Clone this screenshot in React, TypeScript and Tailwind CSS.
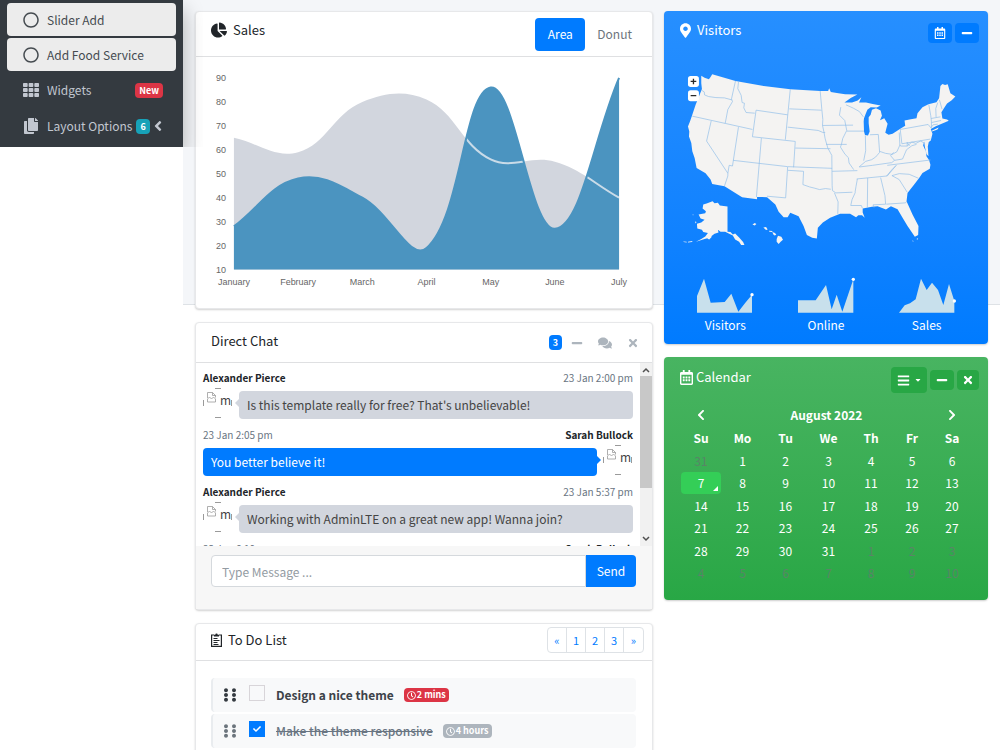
import type { ReactNode } from "react";
import {
  FaAngleLeft,
  FaBars,
  FaCaretDown,
  FaChartPie,
  FaCheck,
  FaChevronLeft,
  FaChevronRight,
  FaComments,
  FaCopy,
  FaEllipsisV,
  FaMapMarkerAlt,
  FaMinus,
  FaRegCalendarAlt,
  FaRegCircle,
  FaRegClock,
  FaTh,
  FaTimes,
} from "react-icons/fa";

const MONTHS = ["January", "February", "March", "April", "May", "June", "July"];
const ELECTRONICS = [65, 59, 80, 81, 56, 55, 40];
const DIGITAL_GOODS = [28, 48, 40, 19, 86, 27, 90];
const TICKS = [90, 80, 70, 60, 50, 40, 30, 20, 10];

const CHART = { left: 38, right: 424, top: 21, bottom: 213 };

type Point = { x: number; y: number };

function toPoints(values: number[]): Point[] {
  const step = (CHART.right - CHART.left) / (values.length - 1);
  return values.map((value, i) => ({
    x: CHART.left + i * step,
    y: CHART.bottom - ((value - 10) / 80) * (CHART.bottom - CHART.top),
  }));
}

function clampY(y: number) {
  return Math.min(CHART.bottom, Math.max(CHART.top, y));
}

// smooth line through the points, tension 0.4
function smoothLine(points: Point[]) {
  const controls = points.map((cur, i) => {
    const prev = points[i - 1] ?? cur;
    const next = points[i + 1] ?? cur;
    const before = Math.hypot(cur.x - prev.x, cur.y - prev.y);
    const after = Math.hypot(next.x - cur.x, next.y - cur.y);
    const a = (0.4 * before) / (before + after);
    const b = (0.4 * after) / (before + after);
    return {
      inX: cur.x - a * (next.x - prev.x),
      inY: clampY(cur.y - a * (next.y - prev.y)),
      outX: cur.x + b * (next.x - prev.x),
      outY: clampY(cur.y + b * (next.y - prev.y)),
    };
  });

  let d = `M${points[0].x} ${points[0].y}`;
  for (let i = 1; i < points.length; i++) {
    const c0 = controls[i - 1];
    const c1 = controls[i];
    d += ` C${c0.outX} ${c0.outY} ${c1.inX} ${c1.inY} ${points[i].x} ${points[i].y}`;
  }
  return d;
}

function SalesChart() {
  const grey = smoothLine(toPoints(ELECTRONICS));
  const blue = smoothLine(toPoints(DIGITAL_GOODS));
  const close = ` L${CHART.right} ${CHART.bottom} L${CHART.left} ${CHART.bottom} Z`;
  const step = (CHART.right - CHART.left) / 6;

  return (
    <svg viewBox="0 0 457 252" className="block w-full" role="img" aria-label="Sales by month">
      <path d={grey + close} fill="#d2d6de" />
      <path d={blue + close} fill="#4b94c0" />
      <path d={grey} fill="none" stroke="#c9dbe8" strokeWidth="2" clipPath="url(#over-blue)" />
      <clipPath id="over-blue">
        <path d={blue + close} />
      </clipPath>
      <path d={blue} fill="none" stroke="#4b94c0" strokeWidth="2" />
      <g
        fill="#666"
        className="text-[9px]"
        fontFamily="'Liberation Sans', Arial, sans-serif"
      >
        {TICKS.map((tick, i) => (
          <text key={tick} x="30" y={24 + i * 24} textAnchor="end">
            {tick}
          </text>
        ))}
        {MONTHS.map((month, i) => (
          <text key={month} x={CHART.left + i * step} y="229" textAnchor="middle">
            {month}
          </text>
        ))}
      </g>
    </svg>
  );
}

function Card({ children }: { children: ReactNode }) {
  return (
    <section className="rounded border border-[#e7e8ea] bg-white shadow-[0_1px_2px_rgba(0,0,0,0.18)]">
      {children}
    </section>
  );
}

function SidebarLink({ children, active }: { children: ReactNode; active?: boolean }) {
  return (
    <a
      href="#"
      className={
        active
          ? "flex h-[33px] items-center whitespace-nowrap rounded bg-[#ececec] pl-4 text-[#454b50]"
          : "flex h-[34px] items-center whitespace-nowrap rounded pl-4 pr-[10px] text-[#c2c7d0]"
      }
    >
      {children}
    </a>
  );
}

function Sidebar() {
  return (
    <aside className="relative z-10 w-[183px] shrink-0 self-start bg-[#343a40] px-[7px] pb-1 pt-[3px] text-[12px] leading-5 shadow-[0_10px_20px_rgba(0,0,0,0.3)] [clip-path:inset(0_-20px_0_0)]">
      <nav className="flex flex-col gap-[2px]">
        <SidebarLink active>
          <FaRegCircle className="mr-2 size-4" />
          Slider Add
        </SidebarLink>
        <SidebarLink active>
          <FaRegCircle className="mr-2 size-4" />
          Add Food Service
        </SidebarLink>
        <SidebarLink>
          <FaTh className="mr-2 size-4" />
          Widgets
          <span className="ml-auto mr-[3px] rounded bg-[#dc3545] px-1 text-[9px] font-bold leading-[15px] text-white">
            New
          </span>
        </SidebarLink>
        <SidebarLink>
          <FaCopy className="mr-2 size-4" />
          Layout Options
          <span className="ml-1 rounded bg-[#17a2b8] px-1 text-[9px] font-bold leading-[15px] text-white">
            6
          </span>
          <FaAngleLeft className="ml-auto size-4" />
        </SidebarLink>
      </nav>
    </aside>
  );
}

function SalesCard() {
  return (
    <Card>
      <header className="flex h-[45px] items-center border-b border-[#dfe0e2] pl-[15px] pr-2">
        <h3 className="flex items-center gap-[6px] pb-2 text-[13px] leading-5">
          <FaChartPie className="size-4" />
          Sales
        </h3>
        <div className="ml-auto flex text-[12px] leading-5">
          <button className="h-[33px] w-[50px] rounded bg-[#007bff] text-white">Area</button>
          <button className="h-[33px] rounded px-3 text-[#6c757d]">Donut</button>
        </div>
      </header>
      <SalesChart />
    </Card>
  );
}

function BrokenAvatar() {
  return (
    <svg viewBox="0 0 30 30" className="size-[30px] shrink-0" role="img" aria-label="message user image">
      <g fill="none" stroke="#9a9a9a">
        <path d="M12 .5h6M12 29.500h6M.500 12v6M28.500 12v6" />
        <path d="M4.500 4.500h5l3 3v2M4.500 4.500v5.500M9.500 4.500v3h3M4.500 11l2-2 2 2 2-2 2 2v3h-8z" strokeWidth=".8" />
      </g>
      <text x="17" y="17" fill="#444" className="text-[12px]">
        m
      </text>
    </svg>
  );
}

type MessageProps = { name: string; time: string; text?: string; own?: boolean };

function Message({ name, time, text, own }: MessageProps) {
  return (
    <div className="h-[57px]">
      <div
        className={
          own
            ? "flex flex-row-reverse justify-between text-[10px] leading-4"
            : "flex justify-between text-[10px] leading-4"
        }
      >
        <b>{name}</b>
        <span className="text-[#697582]">{time}</span>
      </div>
      {text && (
        <div className={own ? "mt-[2px] flex flex-row-reverse gap-[6px]" : "mt-[2px] flex gap-[6px]"}>
          <BrokenAvatar />
          <p
            className={
              own
                ? "relative mt-[3px] h-[28px] flex-1 rounded bg-[#007bff] px-2 text-[12px] leading-[28px] text-white"
                : "relative mt-[3px] h-[28px] flex-1 rounded bg-[#d2d6de] px-2 text-[12px] leading-[28px] text-[#444]"
            }
          >
            {text}
            <span
              className={
                own
                  ? "absolute left-full top-2 border-y-4 border-l-4 border-y-transparent border-l-[#007bff]"
                  : "absolute right-full top-2 border-y-4 border-r-4 border-y-transparent border-r-[#d2d6de]"
              }
            />
          </p>
        </div>
      )}
    </div>
  );
}

function ChatCard() {
  return (
    <Card>
      <header className="flex h-[40px] items-center border-b border-[#dfe0e2] pl-[15px] pr-[13px]">
        <h3 className="pb-1 text-[13px] leading-5">Direct Chat</h3>
        <div className="ml-auto flex items-center text-[#adb5bd]">
          <span className="rounded bg-[#007bff] px-1 text-[9px] font-bold leading-[15px] text-white">
            3
          </span>
          <button aria-label="Collapse" className="ml-[9px]">
            <FaMinus className="size-3" />
          </button>
          <button aria-label="Contacts" className="ml-[15px]">
            <FaComments className="size-[14px]" />
          </button>
          <button aria-label="Close" className="ml-[15px]">
            <FaTimes className="size-3" />
          </button>
        </div>
      </header>
      <div className="flex h-[183px] overflow-hidden">
        <div className="flex-1 p-[7px]">
          <Message
            name="Alexander Pierce"
            time="23 Jan 2:00 pm"
            text="Is this template really for free? That's unbelievable!"
          />
          <Message own name="Sarah Bullock" time="23 Jan 2:05 pm" text="You better believe it!" />
          <Message
            name="Alexander Pierce"
            time="23 Jan 5:37 pm"
            text="Working with AdminLTE on a great new app! Wanna join?"
          />
          <Message own name="Sarah Bullock" time="23 Jan 6:10 pm" />
        </div>
        {/* scrollbar */}
        <div className="flex w-3 flex-col items-center bg-[#f1f1f1] py-1" aria-hidden="true">
          <svg viewBox="0 0 8 6" className="h-[6px] w-2 shrink-0">
            <path d="M1 5l3-3 3 3" fill="none" stroke="#505050" strokeWidth="1.500" />
          </svg>
          <div className="mt-[3px] h-[112px] w-full bg-[#c8c8c8]" />
          <svg viewBox="0 0 8 6" className="mt-auto h-[6px] w-2 shrink-0">
            <path d="M1 1l3 3 3-3" fill="none" stroke="#505050" strokeWidth="1.500" />
          </svg>
        </div>
      </div>
      <form className="flex bg-[#f7f7f7] pb-[22px] pl-[15px] pr-4 pt-[9px] text-[12px] leading-5">
        <input
          type="text"
          aria-label="Message"
          placeholder="Type Message ..."
          className="h-8 min-w-0 flex-1 rounded-l border border-[#d5d9dd] bg-white px-[10px] placeholder:text-[#939ba2]"
        />
        <button type="button" className="h-8 w-[50px] rounded-r bg-[#007bff] text-white">
          Send
        </button>
      </form>
    </Card>
  );
}

type TodoProps = { label: string; time: string; done?: boolean };

function TodoItem({ label, time, done }: TodoProps) {
  return (
    <li className="flex h-[34px] items-center rounded-sm border-l-2 border-[#e9ecef] bg-[#f8f9fa] pl-2">
      <span
        className={
          done
            ? "flex w-[18px] justify-center gap-[2px] text-[#6c757d]"
            : "flex w-[18px] justify-center gap-[2px] text-[#343a40]"
        }
      >
        <FaEllipsisV className="h-[14px] w-[6px]" />
        <FaEllipsisV className="h-[14px] w-[6px]" />
      </span>
      <label className="flex items-center">
        <span className="relative mb-1 ml-[10px] mr-[11px] flex size-4">
          <input
            type="checkbox"
            defaultChecked={done}
            className="peer size-4 appearance-none border border-[#d8d5d9] bg-[#f8f9fa] checked:border-[#007bff] checked:bg-[#007bff]"
          />
          <FaCheck className="pointer-events-none absolute left-1 top-1 hidden size-2 text-white peer-checked:block" />
        </span>
        <span
          className={
            done
              ? "text-[12px] font-medium leading-5 text-[#697582] line-through"
              : "text-[12px] font-bold leading-5 text-[#3d4349]"
          }
        >
          {label}
        </span>
      </label>
      <span
        className={
          done
            ? "ml-[10px] flex items-center gap-px rounded bg-[#adb5bd] px-[3px] text-[9px] font-bold leading-[14px] text-white"
            : "ml-[10px] flex items-center gap-px rounded bg-[#dc3545] px-[3px] text-[9px] font-bold leading-[14px] text-white"
        }
      >
        <FaRegClock className="size-[9px]" />
        {time}
      </span>
    </li>
  );
}

function TodoCard() {
  return (
    <Card>
      <header className="flex h-[37px] items-center border-b border-[#dfe0e2] pb-px pl-[15px] pr-2">
        <h3 className="flex items-center gap-[6px] pb-1 text-[13px] leading-5">
          <svg viewBox="0 0 11 14" className="h-[14px] w-[11px]" fill="none" stroke="currentColor">
            <path d="M3 2H.600v11.400h9.800V2H8" strokeWidth="1.200" />
            <path d="M3 3.500V1.800h1.300a1.200 1.200 0 0 1 2.400 0H8v1.700z" fill="currentColor" stroke="none" />
            <path d="M2.500 5.500h4M2.500 7.500h6M2.500 9.500h4M2.500 11.500h5" />
          </svg>
          To Do List
        </h3>
        <nav className="mb-[3px] ml-auto flex divide-x divide-[#dee2e6] rounded border border-[#dee2e6] text-[11px] leading-6 text-[#007bff]">
          {["«", "1", "2", "3", "»"].map((page) => (
            <a key={page} href="#" className="w-[19px] text-center">
              {page}
            </a>
          ))}
        </nav>
      </header>
      <ul className="flex flex-col gap-[2px] pb-4 pl-[15px] pr-4 pt-[17px]">
        <TodoItem label="Design a nice theme" time="2 mins" />
        <TodoItem done label="Make the theme responsive" time="4 hours" />
      </ul>
    </Card>
  );
}

function UsMap() {
  return (
    <svg viewBox="54 192 849 543" className="block w-full" role="img" aria-label="Map of the United States">
      <g fill="#f4f3f2" strokeLinejoin="round">
        {/* mainland */}
        <path d="M112 212L122 218 135 223 140 216 145 208 215 228 300 243 380 253 470 258 494 258 497 250 502 261 525 265 545 268 582 269 562 279 543 293 566 293 583 287 594 277 587 293 608 293 628 297 652 302 640 308 622 307 612 315 606 330 602 340 601 350 602 380 605 391 614 392 619 380 616 355 616 337 622 330 626 315 638 310 652 317 656 333 650 346 663 340 673 357 669 372 666 384 676 390 688 387 710 373 726 363 724 347 743 343 760 340 763 325 778 307 796 298 820 292 828 280 832 243 838 237 846 240 854 238 862 265 877 275 866 286 852 296 846 305 835 322 838 341 852 344 857 348 843 354 818 364 803 373 808 387 803 407 797 412 794 425 796 455 790 448 785 425 783 410 780 422 788 440 790 455 798 467 802 480 800 492 778 505 768 520 753 540 733 565 730 590 748 630 766 665 765 692 755 697 733 665 718 640 703 614 683 605 668 615 643 605 626 607 598 612 598 624 604 640 596 632 585 632 578 638 560 628 530 628 500 640 478 654 463 670 460 702 446 700 430 692 420 665 405 635 380 625 372 638 360 638 345 622 335 600 310 578 280 577 280 584 235 578 182 545 145 538 140 525 125 506 98 490 92 460 85 440 82 415 75 395 76 380 72 365 78 350 85 330 95 300 105 275 114 252 112 235z" />
        {/* Alaska */}
        <path d="M118 600L128 597 146 590 152 596 162 595 168 603 191 606 191 682 200 683 207 690 214 687 226 699 238 713 242 722 232 722 226 712 214 705 207 693 196 688 184 682 170 682 162 676 164 684 152 688 144 694 136 700 122 704 96 712 112 704 124 696 132 686 118 683 114 676 100 672 99 658 112 654 122 646 110 642 104 630 124 626 126 620 116 612z" />
        <path d="M58 711l10 1v2l-9-1zM72 712l14-2 -2 3 -12 1zM86 629l3 2 -2 2zM93 651l5 2 -3 4zM130 702l10-8 4 3 -8 8z" />
        {/* Hawaii */}
        <path d="M266 660l7-4 5 3 -5 4zM299 669l8-1 5 7 -5 2zM316 679l10 1 0 3 -9-1zM326 683l8 3 4 5 -5 2 -4-3zM343 694l10 3 5 9 -7 6 -6 7 -6-7 0-8z" />
        {/* Long Island, Florida Keys */}
        <path d="M807 377l16-7 4-2 -4 6 -16 6zM746 709l4 0 1 3zM760 704l5-3 -2 5z" />
      </g>
      {/* state borders */}
      <g fill="none" stroke="#8ebde8" strokeWidth="2" strokeLinejoin="round">
        <path d="M113 256l8 5 1 9 12 5 22 3 26 1 22 6M215 228l-12 54 3 8 -14 24 -8 42M85 334l100 22 81 18M224 231l-2 20 10 20 3 22 7 2 -2 14 7 14 26 2M277 316l-11 80 129 14M277 316l95 14M380 253l-15 152M377 312l97 4M372 367l92 10 14 6 7 0M142 348l-14 61 64 97M192 506l0 8 -10 30M192 506l4-24 10 2 18-117M293 400l-15 178M208 467l164 19 134 5M395 410l-5 78M395 430l106 2M372 487l-6 93 -56-5M373 497l47 3 -2 40 20 7 16 4 14 4 18-3 16 2" />
        <path d="M470 258l5 56 3 30 -1 18 4 18 4 22 8 28M477 362l92-1M488 419l62 0M493 430l12 22 1 90M506 500l76-2M506 542l1 16 10 7 50-2M513 565l11 27 -1 36M532 307l-4 24 16 16 6 30 -12 24 -4 18 -3 8 14 22 10 10 2 16 14 20M548 300l22 10 18 10 12 16M550 379l52 0M606 392l1 46 -6 30M620 390l25-1 4 54M649 443l-12 14 -12 8 -18 5 -20 17M649 440l18 6 20 3 14-8 9-20 -2-38M588 487l40-5 56-8M684 475l10-8 -12-14 9-10M580 523l92-9 27-32M576 563l-10 22 -4 18 32 0 3 8M582 523l-4 22 -3 18M613 520l-1 90M652 519l13 54 2 26 -38 2 3 8M669 599l58-4 4-5M686 513l22 12 24 38M686 513l22-6 30 2 28 12M672 482l130-16M699 482l-12 12 -17 20M694 467l24-4 12-28 16-12 14-4M710 420l2 4 20 0 0-11 7 10M711 374l5 43 86-14M711 374l84-15 10 12M732 424l14-12 12 4 14-7 12 6M797 299l6 34 2 18 0 20M824 293l-6 18 1 26M829 285l8 28M804 341l28-5M806 353l28-6M806 366l4-6 14-2" />
      </g>
      <g>
        <rect x="72" y="213" width="33" height="33" rx="8" fill="#fff" />
        <rect x="72" y="256" width="33" height="33" rx="8" fill="#fff" />
        <path d="M80 229h17M88.500 221v17M80 272h17" stroke="#292929" strokeWidth="4" />
      </g>
    </svg>
  );
}

const SPARKS = [
  { label: "Visitors", points: [[1, 53], [22, 1], [42, 73], [84, 71], [104, 46], [125, 100], [146, 73], [166, 49]] },
  { label: "Online", points: [[1, 66], [54, 66], [85, 20], [102, 93], [117, 49], [134, 100], [167, 3]] },
  { label: "Sales", points: [[1, 103], [18, 81], [34, 75], [51, 63], [67, 1], [84, 35], [100, 13], [118, 35], [134, 80], [151, 17], [167, 68]] },
];

function VisitorsCard() {
  return (
    <section className="rounded bg-linear-to-b from-[#268fff] to-[#007bff] pb-[7px] text-white shadow-[0_1px_2px_rgba(0,0,0,0.2)]">
      <header className="flex justify-between pl-4 pr-[9px] pt-[9px]">
        <h3 className="flex h-5 items-center gap-[6px] text-[13px] leading-5">
          <FaMapMarkerAlt className="h-[15px] w-[11px]" />
          Visitors
        </h3>
        <div className="mt-[3px] flex gap-[3px]">
          <button aria-label="Date range" className="flex h-5 w-6 items-center justify-center rounded bg-[#007bff]">
            <FaRegCalendarAlt className="size-3" />
          </button>
          <button aria-label="Collapse" className="flex h-5 w-6 items-center justify-center rounded bg-[#007bff]">
            <FaMinus className="size-3" />
          </button>
        </div>
      </header>
      <div className="pl-[18px] pr-6 pt-[26px]">
        <UsMap />
      </div>
      <div className="mt-[28px] grid grid-cols-3 px-[11px] text-center text-[12px] leading-6">
        {SPARKS.map((spark) => {
          const line = spark.points.map((p) => p.join(",")).join(" ");
          const [lastX, lastY] = spark.points[spark.points.length - 1];
          return (
            <div key={spark.label}>
              <svg viewBox="-2 -4 174 108" className="mx-auto block h-9 w-[58px]">
                <polygon points={`1,103 ${line} ${lastX},103`} fill="#c8e0ec" />
                <circle cx={lastX} cy={lastY} r="5" fill="#fff" />
              </svg>
              {spark.label}
            </div>
          );
        })}
      </div>
    </section>
  );
}

const WEEKS = [
  [31, 1, 2, 3, 4, 5, 6],
  [7, 8, 9, 10, 11, 12, 13],
  [14, 15, 16, 17, 18, 19, 20],
  [21, 22, 23, 24, 25, 26, 27],
  [28, 29, 30, 31, 1, 2, 3],
  [4, 5, 6, 7, 8, 9, 10],
];

function isOtherMonth(week: number, day: number) {
  return (week === 0 && day > 7) || (week > 3 && day < 20);
}

function CalendarCard() {
  return (
    <section className="rounded bg-linear-to-b from-[#48b461] to-[#28a745] pb-4 text-white shadow-[0_1px_2px_rgba(0,0,0,0.2)]">
      <header className="flex justify-between pl-4 pr-[9px] pt-[10px]">
        <h3 className="flex h-5 items-center gap-[3px] text-[13px] leading-5">
          <FaRegCalendarAlt className="h-[15px] w-[13px]" />
          Calendar
        </h3>
        <div className="flex items-center gap-[3px]">
          <button
            aria-label="Calendar menu"
            className="flex h-[26px] w-9 items-center justify-center gap-1 rounded bg-[#28a745]"
          >
            <FaBars className="size-[13px]" />
            <FaCaretDown className="size-2" />
          </button>
          <button aria-label="Collapse" className="flex h-5 w-6 items-center justify-center rounded bg-[#28a745]">
            <FaMinus className="size-3" />
          </button>
          <button aria-label="Close" className="flex h-5 w-[22px] items-center justify-center rounded bg-[#28a745]">
            <FaTimes className="size-3" />
          </button>
        </div>
      </header>
      <div className="pl-[17px] pr-4 pt-[10px]">
        <table className="h-[181px] w-full table-fixed text-center text-[12px] leading-4">
          <colgroup>
            <col className="w-[40px]" />
            <col className="w-[43px]" />
            <col className="w-[43px]" />
            <col className="w-[43px]" />
            <col className="w-[42px]" />
            <col className="w-[40px]" />
            <col className="w-[40px]" />
          </colgroup>
          <thead>
            <tr className="h-[23px]">
              <th>
                <button aria-label="Previous month" className="block w-full">
                  <FaChevronLeft className="mx-auto size-3" />
                </button>
              </th>
              <th colSpan={5}>August 2022</th>
              <th>
                <button aria-label="Next month" className="block w-full">
                  <FaChevronRight className="mx-auto size-3" />
                </button>
              </th>
            </tr>
            <tr className="h-[23px]">
              {["Su", "Mo", "Tu", "We", "Th", "Fr", "Sa"].map((day) => (
                <th key={day}>{day}</th>
              ))}
            </tr>
          </thead>
          <tbody>
            {WEEKS.map((days, week) => (
              <tr key={week}>
                {days.map((day) =>
                  week === 1 && day === 7 ? (
                    <td key={day} className="relative rounded bg-[#34ce57]">
                      {day}
                      <span className="absolute bottom-[3px] right-[3px] border-b-[5px] border-l-[5px] border-b-white border-l-transparent" />
                    </td>
                  ) : (
                    <td key={day} className={isOtherMonth(week, day) ? "text-[#598567]" : ""}>
                      {day}
                    </td>
                  ),
                )}
              </tr>
            ))}
          </tbody>
        </table>
      </div>
    </section>
  );
}

export default function App() {
  return (
    <div className="flex h-screen overflow-hidden bg-white font-['Noto_Sans_CJK_SC',sans-serif] text-[#212529]">
      <Sidebar />
      <main className="grid min-w-0 flex-1 grid-cols-12 items-start gap-x-[11px] self-stretch bg-[linear-gradient(#f4f6f9_304px,#dee2e6_304px,#dee2e6_305px,#fff_305px)] px-3 pt-[11px]">
        <div className="col-span-7 flex flex-col gap-[13px]">
          <SalesCard />
          <ChatCard />
          <TodoCard />
        </div>
        <div className="col-span-5 flex flex-col gap-[13px]">
          <VisitorsCard />
          <CalendarCard />
        </div>
      </main>
    </div>
  );
}
